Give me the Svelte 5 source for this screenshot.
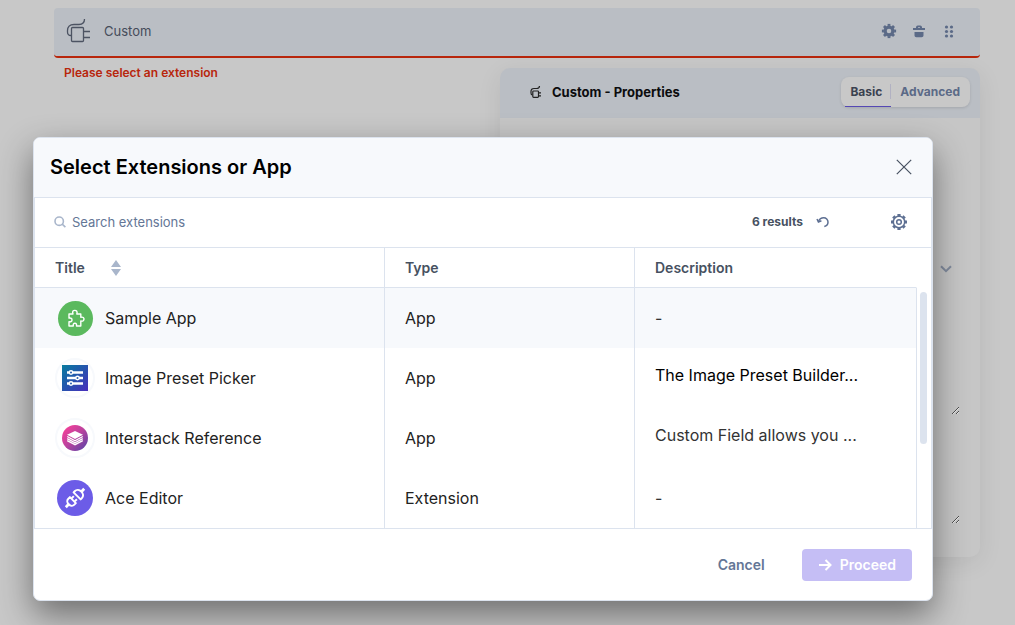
<script lang="ts">
  type Extension = {
    title: string;
    icon: 'puzzle' | 'sliders' | 'stack' | 'plug';
    type: string;
    description: string;
    tone?: string;
  };

  const extensions: Extension[] = [
    { title: 'Sample App', icon: 'puzzle', type: 'App', description: '-' },
    { title: 'Image Preset Picker', icon: 'sliders', type: 'App', description: 'The Image Preset Builder...', tone: 'strong' },
    { title: 'Interstack Reference', icon: 'stack', type: 'App', description: 'Custom Field allows you ...', tone: 'soft' },
    { title: 'Ace Editor', icon: 'plug', type: 'Extension', description: '-' }
  ];

  let search = $state('');
  let selected = $state('Sample App');

  const visible = $derived(
    extensions.filter((item) => item.title.toLowerCase().includes(search.toLowerCase()))
  );

  // gear teeth, one every 45 degrees
  const teeth = [0, 45, 90, 135, 180, 225, 270, 315];
</script>

<div class="page">
  <section class="field">
    <svg class="field-icon" viewBox="0 0 26 26" width="26" height="26">
      <path d="M18.500 1C18.500 4.500 16.500 6.500 13 6.500H8C3.500 6.500 1.500 9 1.500 12.500V14C1.500 16 2.500 17.500 5 17.500" />
      <rect x="5.500" y="9.500" width="12" height="14" rx="1" />
      <path d="M18 13.500h6M18 19.500h6" />
    </svg>
    <span class="field-name">Custom</span>
    <div class="field-actions">
      <button aria-label="Settings">
        <svg viewBox="0 0 16 16" width="16" height="16" fill="none" stroke="#5b6a87">
          <circle cx="8" cy="8" r="3.900" stroke-width="3.200" />
          {#each teeth as angle}
            <path d="M8 .9v2" stroke-width="2.800" transform="rotate({angle} 8 8)" />
          {/each}
        </svg>
      </button>
      <button aria-label="Delete">
        <svg viewBox="0 0 16 16" width="16" height="16" fill="#5b6a87">
          <path fill-rule="evenodd" d="M5 5V4.300a1.800 1.800 0 0 1 1.800-1.800h2.400A1.800 1.800 0 0 1 11 4.300V5h3v2H2V5zm2-.7V5h2v-.7zM3.500 9h9v3.500a1.800 1.800 0 0 1-1.800 1.800H5.300a1.800 1.800 0 0 1-1.800-1.800z" />
        </svg>
      </button>
      <button aria-label="Move">
        <svg viewBox="0 0 16 16" width="16" height="16" fill="#5b6a87">
          {#each [4, 8.5, 13] as y}
            <circle cx="5.500" cy={y} r="1.600" />
            <circle cx="10.500" cy={y} r="1.600" />
          {/each}
        </svg>
      </button>
    </div>
  </section>
  <p class="field-error">Please select an extension</p>

  <aside class="properties">
    <header class="properties-header">
      <svg viewBox="0 0 12 14" width="12" height="14" fill="none" stroke="#222" stroke-width="1.200">
        <path d="M9.500 1C9.500 3 8 3.500 6.500 3.500H4C2 3.500 1 4.500 1 6.500V8c0 1.200.5 2 1.500 2" />
        <rect x="2.800" y="6" width="5.700" height="6.400" rx=".8" />
        <path d="M8.500 7.800h2.500M8.500 10.800h2.500" />
      </svg>
      <h2>Custom - Properties</h2>
      <div class="tabs">
        <button class="tab active"><span>Basic</span></button>
        <button class="tab">Advanced</button>
      </div>
    </header>
    <div class="properties-body">
      <div class="select-row">
        <select aria-label="Extension"></select>
        <svg viewBox="0 0 12 8" width="12" height="8" fill="none" stroke="#828c9e" stroke-width="2">
          <path d="M1 1.200l5 5 5-5" />
        </svg>
      </div>
      <textarea aria-label="Help text"></textarea>
      <textarea aria-label="Instruction"></textarea>
    </div>
  </aside>
</div>

<div class="overlay">
  <div class="modal" role="dialog" aria-label="Select Extensions or App">
    <header class="modal-header">
      <h1>Select Extensions or App</h1>
      <button aria-label="Close">
        <svg viewBox="0 0 16 16" width="16" height="16" fill="none" stroke="#475161" stroke-width="1.200">
          <path d="M.8.8l14.400 14.400M15.200.8L.8 15.200" />
        </svg>
      </button>
    </header>

    <div class="panel">
      <div class="toolbar">
        <svg viewBox="0 0 12 12" width="12" height="12" fill="none" stroke="#a9b6cb" stroke-width="1.600">
          <circle cx="5.200" cy="5.200" r="4.200" />
          <path d="M8.200 8.200l3.200 3" />
        </svg>
        <input type="text" placeholder="Search extensions" aria-label="Search extensions" bind:value={search} />
        <span class="results">6 results</span>
        <button class="reset" aria-label="Reload" onclick={() => (search = '')}>
          <svg viewBox="0 0 14 12" width="14" height="12" fill="none" stroke="#5d6f92" stroke-width="1.500">
            <path d="M2.500 5.500C3.500 3 5.500 1.800 7.700 1.800a4.300 4.300 0 0 1 4.300 4.300c0 2.300-1.500 4.100-3.700 4.500" />
            <path d="M1 3l1.400 3 3-1.300" />
          </svg>
        </button>
        <button aria-label="Column settings">
          <svg viewBox="0 0 18 18" width="18" height="18" fill="none" stroke="#5d6f92">
            <circle cx="9" cy="9" r="5.700" stroke-width="1.500" />
            <circle cx="9" cy="9" r="2.300" stroke-width="1.500" />
            {#each teeth as angle}
              <path d="M9 1v2" stroke-width="3.200" transform="rotate({angle} 9 9)" />
            {/each}
          </svg>
        </button>
      </div>

      <div class="table-area">
        <table>
          <thead>
            <tr>
              <th class="col-title">
                <div class="sortable">
                  Title
                  <button aria-label="Sort by title">
                    <svg viewBox="0 0 10 16" width="10" height="16" fill="#a9b6cb">
                      <path d="M5 0l5 7H0zM5 16l5-7H0z" />
                    </svg>
                  </button>
                </div>
              </th>
              <th class="col-type">Type</th>
              <th>Description</th>
            </tr>
          </thead>
          <tbody>
            {#each visible as item}
              <tr class:selected={selected === item.title} onclick={() => (selected = item.title)}>
                <td>
                  <div class="title-cell">
                    <span class="app-icon">
                      {#if item.icon === 'puzzle'}
                        <svg viewBox="0 0 40 40" width="40" height="40">
                          <circle cx="20.500" cy="20.500" r="17.500" fill="#5bb95e" />
                          <path
                            d="M14 16h4c-1-2.600.2-3.600 1.800-3.600s2.900 1 2 3.600h4v3.300c2.300-.6 3.200.6 3.200 1.800s-.9 2.500-3.200 1.900V28h-4.300c.4-2-.4-2.700-1.600-2.700s-2 .7-1.600 2.700H14v-4.300c2.200.4 3-.6 3-1.800s-.8-2.100-3-1.800z"
                            fill="none"
                            stroke="#fff"
                            stroke-width="1.400"
                            stroke-linejoin="round"
                          />
                        </svg>
                      {:else if item.icon === 'sliders'}
                        <svg viewBox="0 0 40 40" width="40" height="40">
                          <defs>
                            <linearGradient id="sliders-fill" x1="0" y1="0" x2="1" y2="1">
                              <stop offset="0" stop-color="#087d9e" />
                              <stop offset=".5" stop-color="#2654ae" />
                              <stop offset="1" stop-color="#492ebc" />
                            </linearGradient>
                          </defs>
                          <circle cx="20" cy="20" r="19" fill="#fff" stroke="#f7f9fc" stroke-width="2" />
                          <rect x="7" y="7" width="26" height="26" fill="url(#sliders-fill)" />
                          <path d="M12 14.500h16M12 20h16M12 25.500h16" stroke="#fff" stroke-width="2.400" />
                          <g fill="#2c5fae" stroke="#fff" stroke-width="1.400">
                            <circle cx="16" cy="14.500" r="1.700" />
                            <circle cx="22.500" cy="20" r="1.700" />
                            <circle cx="16" cy="25.500" r="1.700" />
                          </g>
                        </svg>
                      {:else if item.icon === 'stack'}
                        <svg viewBox="0 0 40 40" width="40" height="40">
                          <defs>
                            <linearGradient id="stack-fill" x1="0" y1="0" x2="1" y2="1">
                              <stop offset=".1" stop-color="#f43f98" />
                              <stop offset=".5" stop-color="#b9429e" />
                              <stop offset="1" stop-color="#5144a8" />
                            </linearGradient>
                          </defs>
                          <circle cx="20" cy="20" r="19" fill="#fff" stroke="#f7f9fc" stroke-width="2" />
                          <circle cx="20" cy="20" r="13" fill="url(#stack-fill)" />
                          <path d="M20 13l8 3.800-8 4.200-8-4.200z" fill="#fff" />
                          <path
                            d="M12.200 18.500l7.800 4.200 7.800-4.200M12.200 20.600l7.800 4.200 7.800-4.200M12.200 22.700l7.800 4 7.800-4"
                            fill="none"
                            stroke="#fff"
                            stroke-width="1.300"
                          />
                        </svg>
                      {:else}
                        <svg viewBox="0 0 40 40" width="40" height="40">
                          <circle cx="20" cy="20" r="18" fill="#6c5ce7" />
                          <g transform="rotate(-45 20 20)" fill="none" stroke="#fff" stroke-width="2" stroke-linejoin="round">
                            <path d="M7 20h4M29 20h4" stroke-width="2.800" />
                            <path d="M17 15.800h-2.500c-2 0-3.400 2-3.400 4.200s1.400 4.200 3.400 4.200H17z" />
                            <path d="M17.500 17.800h3M17.500 22.200h3" />
                            <path d="M23 15h1.500c2.800 0 4.500 2.200 4.500 5s-1.700 5-4.500 5H23z" />
                          </g>
                        </svg>
                      {/if}
                    </span>
                    {item.title}
                  </div>
                </td>
                <td>{item.type}</td>
                <td class={item.tone ? `summary ${item.tone}` : 'soft'}>{item.description}</td>
              </tr>
            {/each}
          </tbody>
        </table>
        <div class="scrollbar"><div class="thumb"></div></div>
      </div>
    </div>

    <footer class="modal-footer">
      <button class="cancel">Cancel</button>
      <button class="proceed">
        <svg viewBox="0 0 14 12" width="14" height="12" fill="none" stroke="#fff" stroke-width="2">
          <path d="M1 6h11M7.500 1l5 5-5 5" />
        </svg>
        Proceed
      </button>
    </footer>
  </div>
</div>

<style>
  :global(body) {
    margin: 0;
    background: #c8c8c8;
    font-family: Inter, 'Liberation Sans', sans-serif;
    overflow: hidden;
  }

  button {
    display: flex;
    align-items: center;
    padding: 0;
    border: 0;
    background: none;
    font: inherit;
    cursor: pointer;
  }

  h1,
  h2,
  p {
    margin: 0;
  }

  svg {
    flex-shrink: 0;
  }

  /* ===== Page behind the dialog ===== */
  .page {
    display: flex;
    flex-direction: column;
    padding: 8px 35px 24px 54px;
  }

  .field {
    display: flex;
    align-items: center;
    box-sizing: border-box;
    height: 50px;
    padding: 0 23px 2px 12px;
    background: #babec4;
    border-bottom: 2px solid #b8260c;
    border-radius: 4px;
  }

  .field-icon {
    fill: none;
    stroke: #4c5362;
    stroke-width: 1.3;
  }

  .field-name {
    margin-left: 12px;
    font-size: 13px;
    color: #454c5a;
  }

  .field-actions {
    display: flex;
    gap: 14px;
    margin-left: auto;
  }

  .field-error {
    height: 10px;
    padding-left: 10px;
    font-size: 12px;
    font-weight: 600;
    line-height: 30px;
    color: #b8260c;
  }

  .properties {
    align-self: flex-end;
    width: 480px;
    border-radius: 10px;
    background: #c6c6c6;
    box-shadow: 0 6px 24px rgba(0, 0, 0, 0.08);
  }

  .properties-header {
    display: flex;
    align-items: center;
    box-sizing: border-box;
    height: 50px;
    padding: 0 10px 2px 30px;
    border-radius: 10px 10px 0 0;
    background: #babec4;
  }

  .properties-header h2 {
    margin-left: 10px;
    font-size: 13px;
    font-weight: 700;
    color: #0c0c0e;
  }

  .tabs {
    display: flex;
    height: 30px;
    margin-left: auto;
    padding: 0 4px;
    border-radius: 8px;
    background: #c8c8c8;
    box-shadow: 0 1px 3px rgba(0, 0, 0, 0.12);
  }

  .tab {
    box-sizing: border-box;
    padding: 0 6px 2px 9px;
    font-size: 12px;
    font-weight: 700;
    color: #5b6a87;
  }

  .tab.active {
    padding: 0 0 1px 5px;
    color: #3b4250;
    border-bottom: 1px solid #5548b4;
  }

  .tab.active span {
    padding-right: 8px;
    border-right: 1px solid #b1b1c2;
  }

  .properties-body {
    display: flex;
    flex-direction: column;
    padding: 135px 20px 33px;
  }

  .select-row {
    display: flex;
    align-items: center;
    height: 32px;
    padding-right: 8px;
  }

  .select-row select {
    flex: 1;
    appearance: none;
    border: 0;
    background: none;
  }

  textarea {
    height: 70px;
    margin: 60px 0 0;
    padding: 0;
    border: 0;
    background: none;
    resize: vertical;
  }

  textarea + textarea {
    margin-top: 39px;
  }

  /* ===== Dialog ===== */
  .overlay {
    position: absolute;
    inset: 0;
    padding: 137px 82px 24px 33px;
  }

  .modal {
    border: 1px solid #dce3ee;
    border-radius: 7px;
    background: #fff;
    box-shadow: 0 14px 34px rgba(0, 0, 0, 0.45);
  }

  .modal-header {
    display: flex;
    align-items: center;
    justify-content: space-between;
    box-sizing: border-box;
    height: 59px;
    padding: 0 20px 2px 16px;
    border-radius: 6px 6px 0 0;
    background: #f7f9fc;
  }

  .modal-header h1 {
    font-size: 20px;
    font-weight: 600;
    color: #000;
  }

  .panel {
    border: 1px solid #dce3ee;
  }

  .toolbar {
    display: flex;
    align-items: center;
    box-sizing: border-box;
    height: 50px;
    padding: 0 23px 2px 19px;
    border-bottom: 1px solid #dce3ee;
  }

  .toolbar input {
    flex: 1;
    min-width: 0;
    margin-left: 6px;
    padding: 0;
    border: 0;
    outline: 0;
    font: inherit;
    font-size: 13px;
    color: #475161;
  }

  .toolbar input::placeholder {
    color: #647696;
    opacity: 1;
  }

  .results {
    font-size: 12px;
    font-weight: 700;
    color: #475161;
  }

  .reset {
    margin: 0 60px 0 13px;
  }

  .table-area {
    display: flex;
  }

  table {
    flex: 1;
    table-layout: fixed;
    border-collapse: separate;
    border-spacing: 0;
  }

  th,
  td {
    box-sizing: border-box;
    padding: 0 20px;
    text-align: left;
    border-right: 1px solid #dce3ee;
  }

  th {
    height: 40px;
    font-size: 14px;
    font-weight: 600;
    color: #475161;
    border-bottom: 1px solid #dce3ee;
  }

  th:last-child {
    border-right-color: transparent;
  }

  .col-title {
    width: 350px;
  }

  .col-type {
    width: 250px;
  }

  .sortable {
    display: flex;
    align-items: center;
    gap: 26px;
  }

  td {
    height: 60px;
    font-size: 16px;
    color: #222;
    white-space: nowrap;
  }

  .title-cell {
    display: flex;
    align-items: center;
    gap: 10px;
  }

  .app-icon {
    display: flex;
  }

  .selected td {
    background: #f7f9fc;
  }

  .summary {
    padding-bottom: 6px;
  }

  .soft {
    color: #333;
  }

  .strong {
    color: #000;
  }

  .scrollbar {
    width: 14px;
    padding: 44px 3px 0;
    box-sizing: border-box;
  }

  .thumb {
    width: 7px;
    height: 152px;
    border-radius: 4px;
    background: #dce3ee;
  }

  .modal-footer {
    display: flex;
    align-items: center;
    justify-content: flex-end;
    gap: 37px;
    height: 71px;
    padding-right: 20px;
    font-size: 14px;
    font-weight: 600;
  }

  .cancel {
    color: #647696;
  }

  .proceed {
    gap: 8px;
    height: 32px;
    padding: 0 16px;
    border-radius: 4px;
    background: #c5bef5;
    color: #fff;
  }
</style>
